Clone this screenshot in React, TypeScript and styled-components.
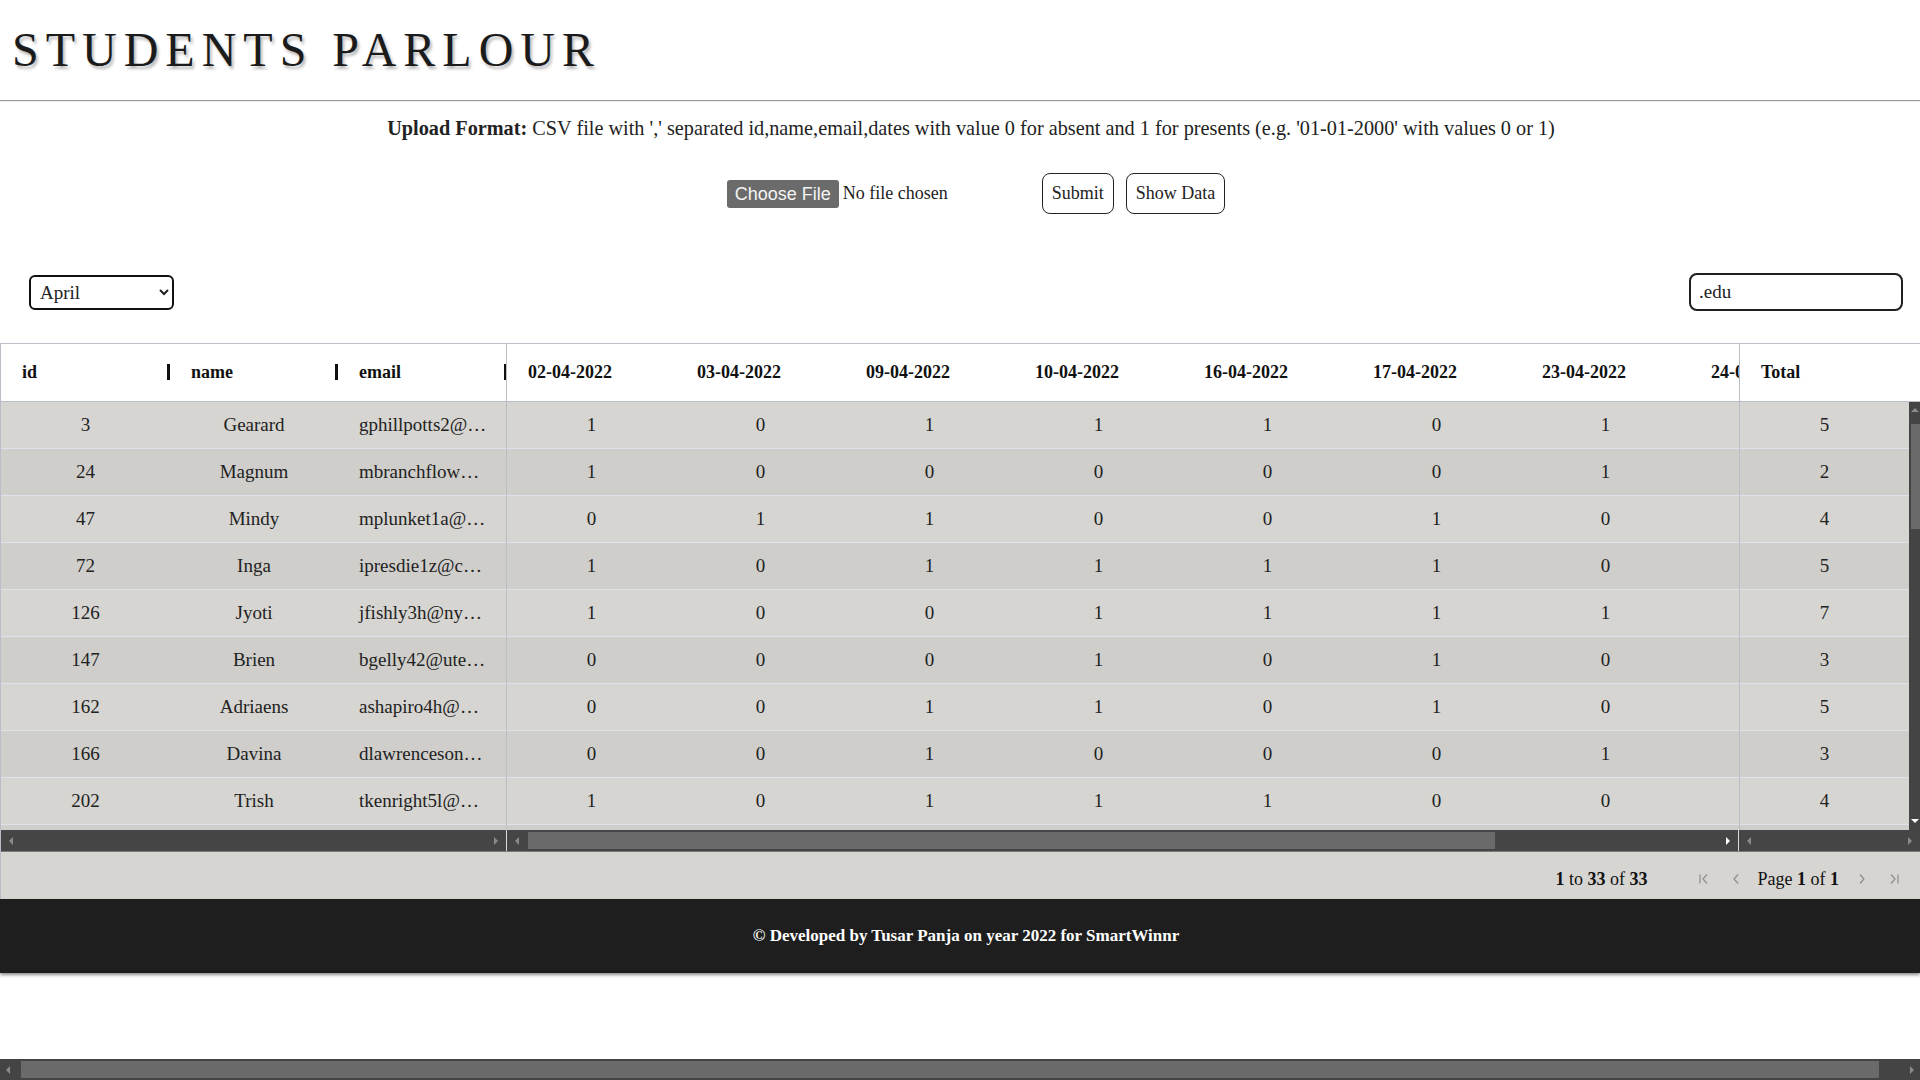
import React from 'react';
import styled, { createGlobalStyle } from 'styled-components';

const GlobalStyle = createGlobalStyle`
  html, body { margin: 0; padding: 0; background: #ffffff; overflow: hidden; }
  body { font-family: "Liberation Serif", "Times New Roman", serif; color: #222222; }
  *, *::before, *::after { box-sizing: border-box; }
`;

const Viewport = styled.div`
  width: 1920px;
  height: 1080px;
  overflow: hidden;
  display: flex;
  flex-direction: column;
`;

const Page = styled.div`
  width: 1942px;
  flex-shrink: 0;
`;

const Header = styled.header`
  padding: 22px 0 23px 12px;
`;

const Title = styled.h1`
  margin: 0;
  font-size: 48px;
  font-weight: 400;
  letter-spacing: 7px;
  line-height: 55px;
  color: #1b1b1b;
  text-shadow: 2px 3px 3px rgba(0, 0, 0, 0.28);
`;

const Divider = styled.hr`
  margin: 0;
  border: 0;
  border-top: 1px solid #9a9a9a;
  border-bottom: 1px solid #ededed;
`;

const UploadInfo = styled.p`
  margin: 15px 0 0;
  text-align: center;
  font-size: 20.25px;
  line-height: 23px;
  color: #222;
`;

const FileRow = styled.div`
  margin-top: 33px;
  height: 41px;
  display: flex;
  justify-content: center;
  align-items: center;
  gap: 12px;
  padding-left: 10px;
`;

const FilePicker = styled.div`
  width: 300px;
  display: flex;
  align-items: center;
  gap: 4px;
  margin-right: 3px;
`;

const FileButton = styled.span`
  display: inline-block;
  height: 28px;
  line-height: 28px;
  padding: 0 8px;
  background: #6b6b6b;
  color: #f4f4f4;
  border-radius: 3px;
  font-family: "Liberation Sans", Arial, sans-serif;
  font-size: 18px;
`;

const FileName = styled.span`
  font-size: 18px;
  color: #222;
`;

const ActionButton = styled.button`
  height: 41px;
  padding: 0 9px;
  border: 1px solid #222;
  border-radius: 8px;
  background: #fff;
  font-family: "Liberation Serif", "Times New Roman", serif;
  font-size: 18px;
  color: #222;
`;

const ControlsRow = styled.div`
  margin-top: 59px;
  width: 1920px;
  height: 38px;
  padding: 0 17px 0 29px;
  display: flex;
  justify-content: space-between;
  align-items: center;
`;

const MonthSelect = styled.select`
  width: 145px;
  height: 35px;
  border: 2px solid #111;
  border-radius: 6px;
  background: #fff;
  padding-left: 5px;
  font-family: "Liberation Serif", "Times New Roman", serif;
  font-size: 19px;
  color: #222;
`;

const SearchInput = styled.input`
  width: 214px;
  height: 38px;
  border: 2px solid #1f1f1f;
  border-radius: 8px;
  padding-left: 8px;
  font-family: "Liberation Serif", "Times New Roman", serif;
  font-size: 19px;
  color: #222;
  outline: none;
`;

const Grid = styled.div`
  margin-top: 32px;
  width: 1920px;
  border-top: 1px solid #babfc7;
  border-left: 1px solid #babfc7;
`;

const HeaderRow = styled.div`
  display: flex;
  height: 58px;
  background: #fff;
  border-bottom: 1px solid #babfc7;
`;

const PinnedLeft = styled.div`
  width: 506px;
  flex-shrink: 0;
  display: flex;
  flex-direction: column;
  border-right: 1px solid #babfc7;
`;

const PinnedRight = styled.div`
  width: 170px;
  flex-shrink: 0;
  display: flex;
  flex-direction: column;
  border-left: 1px solid #babfc7;
`;

const CenterPane = styled.div`
  flex: 1;
  min-width: 0;
  overflow: hidden;
  display: flex;
  flex-direction: column;
`;

const Cells = styled.div`
  display: flex;
  height: 100%;
`;

const HeaderCell = styled.div<{ $w: number; $handle?: 'bar' | 'thin' }>`
  position: relative;
  width: ${(p) => p.$w}px;
  flex-shrink: 0;
  height: 100%;
  padding-left: 21px;
  display: flex;
  align-items: center;
  font-size: 18px;
  font-weight: 700;
  color: #111;
  white-space: nowrap;
  &::after {
    content: '';
    display: ${(p) => (p.$handle ? 'block' : 'none')};
    position: absolute;
    right: 0;
    top: 20px;
    width: ${(p) => (p.$handle === 'thin' ? 2 : 3)}px;
    height: 16px;
    background: #111;
  }
`;

const HeaderGap = styled.div`
  width: 11px;
  flex-shrink: 0;
`;

const Body = styled.div`
  display: flex;
  height: 428px;
  overflow: hidden;
`;

const Row = styled.div<{ $odd: boolean }>`
  display: flex;
  height: 47px;
  flex-shrink: 0;
  background: ${(p) => (p.$odd ? '#d6d5d1' : '#cfcecb')};
  border-bottom: 1px solid #dde2eb;
`;

const Cell = styled.div<{ $w: number; $align?: 'left' | 'center' }>`
  width: ${(p) => p.$w}px;
  flex-shrink: 0;
  padding: 0 18px 0 ${(p) => (p.$align === 'left' ? 21 : 18)}px;
  text-align: ${(p) => p.$align || 'center'};
  font-size: 19px;
  line-height: 46px;
  color: #222;
  white-space: nowrap;
  overflow: hidden;
  text-overflow: ellipsis;
`;

const VScroll = styled.div`
  width: 11px;
  flex-shrink: 0;
  background: #444;
  display: flex;
  flex-direction: column;
  align-items: center;
  padding: 4px 0;
`;

const VThumb = styled.div`
  width: 9px;
  height: 105px;
  margin: 8px 0 0 2px;
  background: #6a6a6a;
`;

const ScrollRow = styled.div`
  display: flex;
  height: 22px;
  background: #454545;
  border-bottom: 1px solid #7a7a7a;
`;

const Track = styled.div<{ $w?: number }>`
  ${(p) => (p.$w ? `width: ${p.$w}px; flex-shrink: 0;` : 'flex: 1; min-width: 0;')}
  display: flex;
  align-items: center;
  padding: 0 6px;
  gap: 6px;
  border-right: 1px solid #d9d9d9;
  &:last-child { border-right: 0; }
`;

const HThumb = styled.div<{ $w: number }>`
  width: ${(p) => p.$w}px;
  height: 17px;
  background: #6a6a6a;
`;

const Spacer = styled.div`
  flex: 1;
`;

const Paging = styled.div`
  height: 47px;
  background: #d6d5d1;
  display: flex;
  justify-content: flex-end;
  align-items: center;
  padding: 7px 10px 0 0;
  font-size: 18px;
  color: #111;
`;

const Summary = styled.span`
  margin-right: 40px;
`;

const PageText = styled.span`
  margin: 0 7px 0 6px;
`;

const PageIcon = styled.svg`
  width: 16px;
  height: 16px;
  margin: 0 8px;
`;

const Footer = styled.footer`
  width: 1920px;
  height: 74px;
  background: #1e1e1e;
  color: #fff;
  display: flex;
  align-items: center;
  justify-content: center;
  font-size: 17px;
  font-weight: 700;
  box-shadow: 0 2px 3px rgba(0, 0, 0, 0.45);
  padding-left: 12px;
`;

const PageScroll = styled.div`
  margin-top: auto;
  height: 21px;
  background: #444;
  display: flex;
  align-items: center;
  padding: 0 4px;
  gap: 8px;
  flex-shrink: 0;
`;

const PageThumb = styled.div`
  flex: 1;
  height: 17px;
  background: #6a6a6a;
  margin-right: 20px;
`;

type Dir = 'left' | 'right' | 'up' | 'down';

const Arrow: React.FC<{ dir: Dir; active?: boolean }> = ({ dir, active }) => {
  const pts: Record<Dir, string> = {
    left: '6,1 2,5 6,9',
    right: '3,1 7,5 3,9',
    up: '1,6 5,2 9,6',
    down: '1,3 5,7 9,3',
  };
  return (
    <svg width="9" height="10" viewBox="0 0 9 10">
      <polygon points={pts[dir]} fill={active ? '#ffffff' : '#8a8a8a'} />
    </svg>
  );
};

const PagerIcon: React.FC<{ kind: 'first' | 'prev' | 'next' | 'last' }> = ({ kind }) => (
  <PageIcon viewBox="0 0 16 16">
    <g fill="none" stroke="#8c8c8c" strokeWidth="1.2">
      {kind === 'first' && (
        <>
          <line x1="4" y1="3.5" x2="4" y2="12.5" />
          <polyline points="11,3.5 7,8 11,12.5" />
        </>
      )}
      {kind === 'prev' && <polyline points="10,3.5 6,8 10,12.5" />}
      {kind === 'next' && <polyline points="6,3.5 10,8 6,12.5" />}
      {kind === 'last' && (
        <>
          <polyline points="5,3.5 9,8 5,12.5" />
          <line x1="12" y1="3.5" x2="12" y2="12.5" />
        </>
      )}
    </g>
  </PageIcon>
);

const dates = [
  '02-04-2022',
  '03-04-2022',
  '09-04-2022',
  '10-04-2022',
  '16-04-2022',
  '17-04-2022',
  '23-04-2022',
  '24-04-2022',
  '30-04-2022',
];

type Student = { id: number; name: string; email: string; marks: number[] };

const students: Student[] = [
  { id: 3, name: 'Gearard', email: 'gphillpotts2@umich.edu', marks: [1, 0, 1, 1, 1, 0, 1, 0, 0] },
  { id: 24, name: 'Magnum', email: 'mbranchflowm0@stanford.edu', marks: [1, 0, 0, 0, 0, 0, 1, 0, 0] },
  { id: 47, name: 'Mindy', email: 'mplunket1a@harvard.edu', marks: [0, 1, 1, 0, 0, 1, 0, 1, 0] },
  { id: 72, name: 'Inga', email: 'ipresdie1z@cornell.edu', marks: [1, 0, 1, 1, 1, 1, 0, 0, 0] },
  { id: 126, name: 'Jyoti', email: 'jfishly3h@nyu.edu', marks: [1, 0, 0, 1, 1, 1, 1, 1, 1] },
  { id: 147, name: 'Brien', email: 'bgelly42@utexas.edu', marks: [0, 0, 0, 1, 0, 1, 0, 0, 1] },
  { id: 162, name: 'Adriaens', email: 'ashapiro4h@berkeley.edu', marks: [0, 0, 1, 1, 0, 1, 0, 1, 1] },
  { id: 166, name: 'Davina', email: 'dlawrenceson4l@princeton.edu', marks: [0, 0, 1, 0, 0, 0, 1, 1, 0] },
  { id: 202, name: 'Trish', email: 'tkenright5l@umn.edu', marks: [1, 0, 1, 1, 1, 0, 0, 0, 0] },
  { id: 219, name: 'Corny', email: 'cbrixey62@yale.edu', marks: [0, 1, 0, 1, 1, 0, 1, 0, 1] },
];

const total = (m: number[]) => m.reduce((a, b) => a + b, 0);

const COL_W = 169;

export default function App() {
  return (
    <Viewport>
      <GlobalStyle />
      <Page>
        <Header>
          <Title>STUDENTS PARLOUR</Title>
        </Header>
        <Divider />
        <UploadInfo>
          <b>Upload Format:</b> CSV file with ',' separated id,name,email,dates with value 0 for absent and 1 for
          presents (e.g. '01-01-2000' with values 0 or 1)
        </UploadInfo>
        <FileRow>
          <FilePicker>
            <FileButton>Choose File</FileButton>
            <FileName>No file chosen</FileName>
          </FilePicker>
          <ActionButton>Submit</ActionButton>
          <ActionButton>Show Data</ActionButton>
        </FileRow>
        <ControlsRow>
          <MonthSelect defaultValue="April">
            <option>January</option>
            <option>February</option>
            <option>March</option>
            <option>April</option>
            <option>May</option>
            <option>June</option>
          </MonthSelect>
          <SearchInput defaultValue=".edu" spellCheck={false} />
        </ControlsRow>
        <Grid>
          <HeaderRow>
            <PinnedLeft>
              <Cells>
                <HeaderCell $w={169} $handle="bar">id</HeaderCell>
                <HeaderCell $w={168} $handle="bar">name</HeaderCell>
                <HeaderCell $w={168} $handle="thin">email</HeaderCell>
              </Cells>
            </PinnedLeft>
            <CenterPane>
              <Cells>
                {dates.map((d) => (
                  <HeaderCell key={d} $w={COL_W}>
                    {d}
                  </HeaderCell>
                ))}
              </Cells>
            </CenterPane>
            <PinnedRight>
              <Cells>
                <HeaderCell $w={169}>Total</HeaderCell>
              </Cells>
            </PinnedRight>
            <HeaderGap />
          </HeaderRow>
          <Body>
            <PinnedLeft>
              {students.map((s, i) => (
                <Row key={s.id} $odd={i % 2 === 0}>
                  <Cell $w={169}>{s.id}</Cell>
                  <Cell $w={168}>{s.name}</Cell>
                  <Cell $w={168} $align="left">
                    {s.email}
                  </Cell>
                </Row>
              ))}
            </PinnedLeft>
            <CenterPane>
              {students.map((s, i) => (
                <Row key={s.id} $odd={i % 2 === 0}>
                  {s.marks.map((m, j) => (
                    <Cell key={j} $w={COL_W}>
                      {m}
                    </Cell>
                  ))}
                </Row>
              ))}
            </CenterPane>
            <PinnedRight>
              {students.map((s, i) => (
                <Row key={s.id} $odd={i % 2 === 0}>
                  <Cell $w={169}>{total(s.marks)}</Cell>
                </Row>
              ))}
            </PinnedRight>
            <VScroll>
              <Arrow dir="up" />
              <VThumb />
              <Spacer />
              <Arrow dir="down" active />
            </VScroll>
          </Body>
          <ScrollRow>
            <Track $w={506}>
              <Arrow dir="left" />
              <Spacer />
              <Arrow dir="right" />
            </Track>
            <Track>
              <Arrow dir="left" />
              <HThumb $w={967} />
              <Spacer />
              <Arrow dir="right" active />
            </Track>
            <Track $w={181}>
              <Arrow dir="left" />
              <Spacer />
              <Arrow dir="right" />
            </Track>
          </ScrollRow>
          <Paging>
            <Summary>
              <b>1</b> to <b>33</b> of <b>33</b>
            </Summary>
            <PagerIcon kind="first" />
            <PagerIcon kind="prev" />
            <PageText>
              Page <b>1</b> of <b>1</b>
            </PageText>
            <PagerIcon kind="next" />
            <PagerIcon kind="last" />
          </Paging>
        </Grid>
        <Footer>© Developed by Tusar Panja on year 2022 for SmartWinnr</Footer>
      </Page>
      <PageScroll>
        <Arrow dir="left" />
        <PageThumb />
        <Arrow dir="right" />
      </PageScroll>
    </Viewport>
  );
}
